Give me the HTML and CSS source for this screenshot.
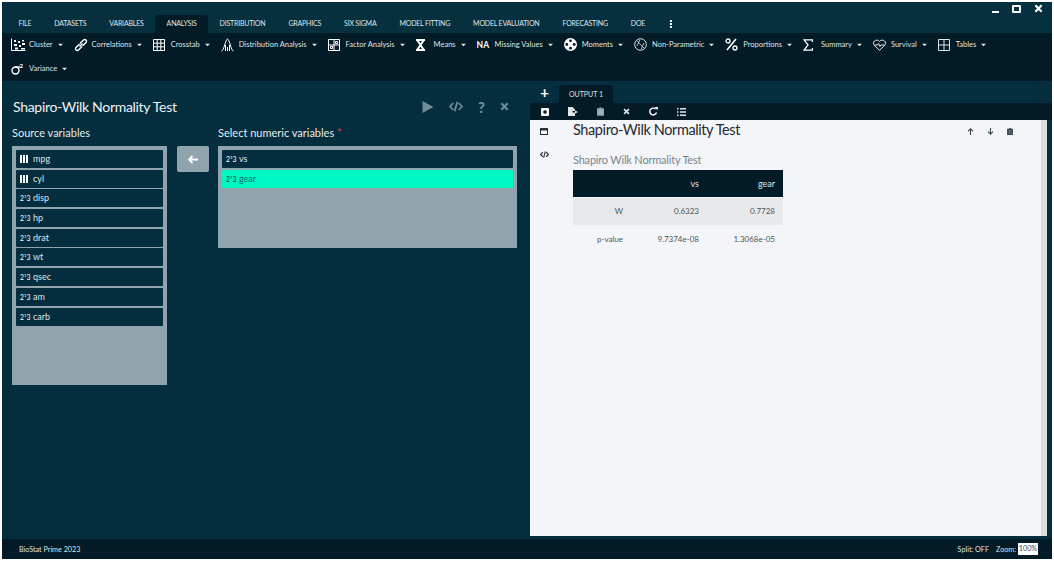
FILE: index.html
```html
<!DOCTYPE html>
<html lang="en">
<head>
  <meta charset="UTF-8" />
  <title>BioStat Prime</title>
  <link rel="stylesheet" href="styles.css">
</head>
<body>

  <svg class="defs" width="0" height="0">
    <symbol id="caret" viewBox="0 0 6 4"><path d="M0 0.500h6L3 3.500z" fill="currentColor"/></symbol>
    <symbol id="trash" viewBox="0 0 10 12"><path d="M3.500 0h3v1.200H10v10.800H0V1.200h3.500z" fill="currentColor"/><path d="M2 4h6v1H2zM2 6.500h6v1H2zM2 9h6v1H2z" fill="#fff" opacity="0.300"/></symbol>
    <symbol id="code" viewBox="0 0 16 12"><path d="M5 2L1 6l4 4M11 2l4 4-4 4M9.500 0.500L6.500 11.500" fill="none" stroke="currentColor" stroke-width="2"/></symbol>
    <symbol id="close" viewBox="0 0 10 10"><path d="M1.500 1.500l7 7M8.500 1.500l-7 7" fill="none" stroke="currentColor" stroke-width="2.400"/></symbol>
  </svg>

  <div class="app">
    <header class="top">
      <div class="window-btns">
        <span class="win-min"></span>
        <span class="win-max"></span>
        <svg class="win-close" width="9" height="9"><use href="#close"/></svg>
      </div>
      <nav class="menu">
        <a>FILE</a>
        <a>DATASETS</a>
        <a>VARIABLES</a>
        <a class="active">ANALYSIS</a>
        <a>DISTRIBUTION</a>
        <a>GRAPHICS</a>
        <a>SIX SIGMA</a>
        <a>MODEL FITTING</a>
        <a>MODEL EVALUATION</a>
        <a>FORECASTING</a>
        <a>DOE</a>
        <a class="dots"><i></i><i></i><i></i></a>
      </nav>
    </header>

    <div class="toolbar">
      <div class="tool">
        <svg width="15" height="13" viewBox="0 0 15 13"><path d="M0.500 0.500v12h14" fill="none" stroke="#fff"/><path d="M3 2h2v2H3zM7 3h2v2H7zM3 6h3v2H3zM8 7h2v2H8zM11 5h3v2h-3zM4 9.500h3v2H4zM10 10h4v1.500h-4zM11 2h2v1.500h-2z" fill="#fff"/></svg>
        <span>Cluster</span><svg class="caret"><use href="#caret"/></svg>
      </div>
      <div class="tool">
        <svg width="14" height="14" viewBox="0 0 14 14"><path d="M5.500 8.500L8.500 5.500M5.500 6L1.800 9.700a1.800 1.800 0 0 0 2.500 2.500L8 8.500M6 5.500l3.700-3.700a1.800 1.800 0 0 1 2.500 2.500L8.500 8" fill="none" stroke="#fff" stroke-width="1.400"/></svg>
        <span>Correlations</span><svg class="caret"><use href="#caret"/></svg>
      </div>
      <div class="tool">
        <svg width="12" height="12" viewBox="0 0 12 12"><path d="M0.500 0.500h11v11h-11zM4.200 0.500v11M7.800 0.500v11M0.500 4.200h11M0.500 7.800h11" fill="none" stroke="#fff"/></svg>
        <span>Crosstab</span><svg class="caret"><use href="#caret"/></svg>
      </div>
      <div class="tool">
        <svg width="13" height="14" viewBox="0 0 13 14"><path d="M0.500 13C3 13 4.500 1 6.500 1S10 13 12.500 13M4.500 13V7M8.500 13V7M6.500 13V9" fill="none" stroke="#fff"/></svg>
        <span>Distribution Analysis</span><svg class="caret"><use href="#caret"/></svg>
      </div>
      <div class="tool">
        <svg width="12" height="12" viewBox="0 0 12 12"><path d="M0.500 0.500h11v11h-11zM6 0.500v11M0.500 6h11M7.500 2.500h2v2h-2zM2.500 7.500h2v2h-2z" fill="none" stroke="#fff"/></svg>
        <span>Factor Analysis</span><svg class="caret"><use href="#caret"/></svg>
      </div>
      <div class="tool">
        <svg width="9" height="12" viewBox="0 0 9 12"><path d="M0 1h9M0 11h9" stroke="#fff" stroke-width="2"/><path d="M1.500 1.500L7.500 10.500M7.500 1.500L1.500 10.500" fill="none" stroke="#fff" stroke-width="2"/></svg>
        <span>Means</span><svg class="caret"><use href="#caret"/></svg>
      </div>
      <div class="tool">
        <b class="na">NA</b>
        <span>Missing Values</span><svg class="caret"><use href="#caret"/></svg>
      </div>
      <div class="tool">
        <svg width="13" height="13" viewBox="0 0 13 13"><circle cx="6.500" cy="6.500" r="6.500" fill="#fff"/><circle cx="6.500" cy="2.800" r="1.400" fill="#021b26"/><circle cx="6.500" cy="10.200" r="1.400" fill="#021b26"/><circle cx="2.800" cy="6.500" r="1.400" fill="#021b26"/><circle cx="10.200" cy="6.500" r="1.400" fill="#021b26"/></svg>
        <span>Moments</span><svg class="caret"><use href="#caret"/></svg>
      </div>
      <div class="tool">
        <svg width="13" height="13" viewBox="0 0 13 13"><circle cx="6.500" cy="6.500" r="5.800" fill="none" stroke="#dfe5e8"/><path d="M2.500 2.500l8 8M6 1.500L3 8M7 11.500L10 5" fill="none" stroke="#dfe5e8" stroke-width="0.800"/></svg>
        <span>Non-Parametric</span><svg class="caret"><use href="#caret"/></svg>
      </div>
      <div class="tool">
        <svg width="13" height="13" viewBox="0 0 13 13"><path d="M11 1L2 12" fill="none" stroke="#fff" stroke-width="1.600"/><circle cx="3" cy="3" r="2" fill="none" stroke="#fff" stroke-width="1.300"/><circle cx="10" cy="10" r="2" fill="none" stroke="#fff" stroke-width="1.300"/></svg>
        <span>Proportions</span><svg class="caret"><use href="#caret"/></svg>
      </div>
      <div class="tool">
        <svg width="10" height="12" viewBox="0 0 10 12"><path d="M9.500 3V0.800H1L5 6l-4 5.200h8.500V9" fill="none" stroke="#fff" stroke-width="1.300"/></svg>
        <span>Summary</span><svg class="caret"><use href="#caret"/></svg>
      </div>
      <div class="tool">
        <svg width="13" height="12" viewBox="0 0 13 12"><path d="M6.500 11.300L1.500 6.500a3 3 0 0 1 0-4.500 3.300 3.300 0 0 1 5 0.500 3.300 3.300 0 0 1 5-0.500 3 3 0 0 1 0 4.500zM1.500 6h3l1-1.500 1.500 3 1-1.500h3.500" fill="none" stroke="#fff" stroke-width="0.900"/></svg>
        <span>Survival</span><svg class="caret"><use href="#caret"/></svg>
      </div>
      <div class="tool">
        <svg width="12" height="12" viewBox="0 0 12 12"><path d="M0.500 0.500h11v11h-11zM6 0.500v11M0.500 6h11" fill="none" stroke="#dfe5e8"/></svg>
        <span>Tables</span><svg class="caret"><use href="#caret"/></svg>
      </div>
      <div class="tool tool-wrap">
        <svg width="13" height="12" viewBox="0 0 13 12"><circle cx="4.500" cy="7.500" r="3.500" fill="none" stroke="#fff" stroke-width="1.400"/><path d="M4.500 4H9" stroke="#fff" stroke-width="1.400"/><text x="8.500" y="5" class="sq">2</text></svg>
        <span>Variance</span><svg class="caret"><use href="#caret"/></svg>
      </div>
    </div>

    <main class="main">
      <section class="dialog">
        <div class="dialog-head">
          <h1>Shapiro-Wilk Normality Test</h1>
          <div class="dialog-actions">
            <svg width="12" height="12" viewBox="0 0 12 12"><path d="M0.500 0L11.500 6 0.500 12z" fill="currentColor"/></svg>
            <svg width="14" height="11"><use href="#code"/></svg>
            <span class="help">?</span>
            <svg width="9" height="9"><use href="#close"/></svg>
          </div>
        </div>

        <div class="pickers">
          <div class="picker source">
            <label>Source variables</label>
            <ul class="varlist">
              <li><span class="ico-bars"><i></i><i></i><i></i></span>mpg</li>
              <li><span class="ico-bars"><i></i><i></i><i></i></span>cyl</li>
              <li><span class="ico-num">2<sup>1</sup>3</span>disp</li>
              <li><span class="ico-num">2<sup>1</sup>3</span>hp</li>
              <li><span class="ico-num">2<sup>1</sup>3</span>drat</li>
              <li><span class="ico-num">2<sup>1</sup>3</span>wt</li>
              <li><span class="ico-num">2<sup>1</sup>3</span>qsec</li>
              <li><span class="ico-num">2<sup>1</sup>3</span>am</li>
              <li><span class="ico-num">2<sup>1</sup>3</span>carb</li>
            </ul>
          </div>

          <button class="move-btn">
            <svg width="10" height="9" viewBox="0 0 10 9"><path d="M4.500 0.800L1 4.500l3.500 3.700M1.500 4.500H10" fill="none" stroke="#fff" stroke-width="1.800"/></svg>
          </button>

          <div class="picker target">
            <label>Select numeric variables <em>*</em></label>
            <ul class="varlist">
              <li><span class="ico-num">2<sup>1</sup>3</span>vs</li>
              <li class="selected"><span class="ico-num">2<sup>1</sup>3</span>gear</li>
            </ul>
          </div>
        </div>
      </section>

      <section class="output">
        <div class="tabs">
          <span class="add-tab">+</span>
          <span class="tab">OUTPUT 1</span>
        </div>
        <div class="out-tools">
          <svg width="8" height="8" viewBox="0 0 8 8"><path d="M1 0h6a1 1 0 0 1 1 1v6a1 1 0 0 1-1 1H1a1 1 0 0 1-1-1V1a1 1 0 0 1 1-1zM3.300 2v1.300H2v1.400h1.300V6h1.400V4.700H6V3.300H4.700V2z" fill="#fff" fill-rule="evenodd"/></svg>
          <svg width="10" height="9" viewBox="0 0 10 9"><path d="M0 0h4.500L7 2.500V4H4.500v1.500H7V9H0zM7 3.500L10 5 7 6.500z" fill="#dfe5e8"/></svg>
          <svg class="out-trash" width="7" height="9"><use href="#trash"/></svg>
          <svg width="7" height="7"><use href="#close"/></svg>
          <svg width="9" height="9" viewBox="0 0 9 9"><path d="M7.500 5.500A3.400 3.400 0 1 1 6.500 2" fill="none" stroke="#fff" stroke-width="1.400"/><path d="M5.500 0H8.800V3.300z" fill="#fff"/></svg>
          <svg width="9" height="8" viewBox="0 0 9 8"><path d="M0 0h1.500v1.500H0zM3 0h6v1.500H3zM0 3.200h1.500v1.500H0zM3 3.200h6v1.500H3zM0 6.500h1.500V8H0zM3 6.500h6V8H3z" fill="#dfe5e8"/></svg>
        </div>
        <div class="out-body">
          <div class="rail">
            <svg width="8" height="7" viewBox="0 0 8 7"><path d="M0 0h8v7H0zM1 2.500V6h6V2.500z" fill="#263238" fill-rule="evenodd"/></svg>
            <svg width="9" height="7"><use href="#code"/></svg>
          </div>
          <div class="report">
            <div class="report-head">
              <h2>Shapiro-Wilk Normality Test</h2>
              <div class="report-actions">
                <svg width="7" height="7" viewBox="0 0 7 7"><path d="M3.500 7V1M1 3.300L3.500 0.800 6 3.300" fill="none" stroke="currentColor" stroke-width="1.100"/></svg>
                <svg width="7" height="7" viewBox="0 0 7 7"><path d="M3.500 0v6M1 3.700l2.500 2.500L6 3.700" fill="none" stroke="currentColor" stroke-width="1.100"/></svg>
                <svg width="6" height="7"><use href="#trash"/></svg>
              </div>
            </div>
            <h3>Shapiro Wilk Normality Test</h3>
            <table class="result">
              <thead>
                <tr><th></th><th>vs</th><th>gear</th></tr>
              </thead>
              <tbody>
                <tr><td>W</td><td>0.6323</td><td>0.7728</td></tr>
                <tr><td>p-value</td><td>9.7374e-08</td><td>1.3068e-05</td></tr>
              </tbody>
            </table>
          </div>
          <div class="scrollbar"></div>
        </div>
      </section>
    </main>

    <footer class="status">
      <span>BioStat Prime 2023</span>
      <div class="status-right">
        <span>Split: OFF</span>
        <span>Zoom:</span>
        <span class="zoom-box">100%</span>
      </div>
    </footer>
  </div>

</body>
</html>
```

FILE: styles.css
```css
:root {
  --top: #07303f;
  --bar: #021b26;
  --main: #042e3e;
  --panel: #90a4ae;
  --selected: #00f8c4;
  --text: #dfe5e8;
}

* {
  margin: 0;
  padding: 0;
  box-sizing: border-box;
}

html, body {
  height: 100%;
  overflow: hidden;
}

body {
  background: #fff;
  font-family: "Lato", sans-serif;
  color: var(--text);
}

.defs {
  position: absolute;
}

.app {
  width: 1050px;
  height: 557px;
  margin: 2px 2px 3px;
  display: flex;
  flex-direction: column;
  background: var(--main);
}

/* top bar */
.top {
  height: 31px;
  background: var(--top);
}

.window-btns {
  height: 13px;
  display: flex;
  justify-content: flex-end;
  align-items: center;
  gap: 13px;
  padding-right: 9px;
}

.win-min {
  width: 7px;
  height: 2px;
  margin-top: 7px;
  background: #fff;
}

.win-max {
  width: 9px;
  height: 8px;
  border: 2px solid #fff;
  border-radius: 1px;
}

.win-close {
  color: #fff;
}

.menu {
  display: flex;
  height: 18px;
  padding-left: 5px;
  font-size: 7px;
  letter-spacing: -0.200px;
}

.menu a {
  padding: 0 11.500px;
  line-height: 17px;
  white-space: nowrap;
}

.menu a.active {
  background: var(--bar);
  border-radius: 3px 3px 0 0;
}

.menu .dots {
  display: flex;
  flex-direction: column;
  justify-content: center;
  gap: 1px;
  padding: 0 10px;
  margin-left: 3px;
}

.dots i {
  width: 2px;
  height: 2px;
  background: #fff;
}

/* analysis toolbar */
.toolbar {
  height: 48px;
  background: var(--bar);
  display: flex;
  flex-wrap: wrap;
  align-content: flex-start;
  padding: 3px 0 0 9px;
  gap: 7px 0;
  font-size: 7.500px;
}

.tool {
  display: grid;
  grid-template-columns: 18px auto auto;
  align-items: center;
  height: 17px;
  padding-right: 11px;
  white-space: nowrap;
}

/* the last button always drops to the second row */
.tool-wrap {
  margin-right: 60px;
}

.tool .caret {
  width: 5px;
  height: 4px;
  margin-left: 5px;
  color: var(--text);
}

.na {
  font-size: 8.500px;
  color: #fff;
}

.sq {
  font-size: 6px;
  font-weight: bold;
  fill: #fff;
}

/* main area */
.main {
  flex: 1;
  display: flex;
  min-height: 0;
}

.dialog {
  width: 528px;
  padding: 16px 10px 0;
}

.dialog-head {
  display: flex;
  justify-content: space-between;
  align-items: center;
  height: 18px;
  padding-right: 11px;
}

h1 {
  font-size: 14px;
  font-weight: 400;
  letter-spacing: -0.300px;
  color: #eef2f3;
  margin-left: 1px;
}

.dialog-actions {
  display: flex;
  align-items: center;
  gap: 15px;
  margin-top: 1px;
  color: #6f8c99;
}

.help {
  font-size: 15px;
  font-weight: 900;
  line-height: 14px;
}

.pickers {
  display: flex;
  margin-top: 10px;
}

.picker label {
  display: block;
  height: 21px;
  font-size: 11px;
  line-height: 16px;
  color: #e6ebed;
}

.picker em {
  color: #e53935;
  font-style: normal;
}

.source {
  width: 155px;
}

.target {
  width: 299px;
}

.varlist {
  list-style: none;
  background: var(--panel);
  padding: 4px 4px 0;
  display: flex;
  flex-direction: column;
  gap: 1.700px;
}

.source .varlist {
  height: 239px;
}

.target .varlist {
  height: 102px;
}

.varlist li {
  height: 18px;
  background: var(--main);
  display: flex;
  align-items: center;
  padding-left: 4px;
  font-size: 9px;
  line-height: 16px;
  color: #dfe5e8;
  border-radius: 1px;
}

.varlist li.selected {
  background: var(--selected);
  color: #0f6f66;
}

.ico-bars {
  display: flex;
  gap: 1px;
  width: 13px;
}

.ico-bars i {
  width: 2px;
  height: 8px;
  background: #fff;
}

.ico-num {
  width: 13px;
  flex: none;
  font-size: 6.800px;
  color: #fff;
}

.selected .ico-num {
  color: #063a3a;
}

.ico-num sup {
  font-size: 4.500px;
  line-height: 0;
  vertical-align: 3px;
}

.move-btn {
  width: 32px;
  height: 26px;
  margin: 21px 9px 0 10px;
  background: var(--panel);
  border: none;
  border-radius: 2px;
}

/* output area */
.output {
  flex: 1;
  display: flex;
  flex-direction: column;
  padding-top: 4px;
  min-width: 0;
}

.tabs {
  display: flex;
  height: 18px;
  font-size: 7px;
}

.add-tab {
  width: 29px;
  text-align: center;
  font-size: 15px;
  line-height: 14px;
  font-weight: 700;
  color: #fff;
}

.tab {
  width: 54px;
  background: var(--bar);
  border-radius: 3px 3px 0 0;
  text-align: center;
  line-height: 19px;
}

.out-tools {
  height: 17px;
  background: var(--bar);
  display: flex;
  align-items: center;
  gap: 19px;
  padding-left: 11px;
  border-radius: 3px 3px 0 0;
  color: var(--text);
}

.out-trash {
  color: #90a4ae;
}

.out-body {
  height: 416px;
  margin-right: 5px;
  background: #f3f5f8;
  display: flex;
  color: #37474f;
}

.rail {
  width: 43px;
  padding: 8px 0 0 10px;
  display: flex;
  flex-direction: column;
  gap: 16px;
  color: #263238;
}

.report {
  flex: 1;
}

.report-head {
  display: flex;
  justify-content: space-between;
  align-items: center;
  height: 18px;
  padding-right: 28px;
}

h2 {
  font-size: 14.500px;
  font-weight: 400;
  letter-spacing: -0.400px;
  color: #1f2a30;
}

.report-actions {
  display: flex;
  align-items: center;
  gap: 13px;
  margin-top: 4px;
  color: #37474f;
}

h3 {
  font-size: 11px;
  font-weight: 400;
  letter-spacing: -0.200px;
  color: #78868e;
  margin-top: 14px;
  height: 18px;
  line-height: 15px;
}

.result {
  width: 210px;
  border-collapse: collapse;
  font-size: 8px;
  text-align: right;
}

.result th {
  height: 27px;
  background: var(--bar);
  color: #dfe5e8;
  font-size: 9px;
  font-weight: 400;
  padding-right: 8px;
  border-bottom: 1px solid #f3f5f8;
}

.result td {
  height: 28px;
  padding-right: 8px;
  color: #4a575e;
}

.result tbody tr:first-child {
  background: #e8e9eb;
}

.result th:nth-child(1), .result td:nth-child(1) {
  width: 52px;
  padding-right: 2px;
  padding-left: 0;
}

.result th:nth-child(2), .result td:nth-child(2) {
  width: 82px;
}

.scrollbar {
  width: 6px;
  background: #dcdedf;
}

/* status bar */
.status {
  height: 20px;
  background: var(--bar);
  display: flex;
  justify-content: space-between;
  align-items: center;
  padding: 0 14px 0 17px;
  font-size: 7.200px;
}

.status-right {
  display: flex;
  align-items: center;
  gap: 7px;
}

.zoom-box {
  width: 20px;
  margin-left: -5px;
  height: 12px;
  line-height: 12px;
  background: #fff;
  color: #37474f;
  text-align: center;
}
```
